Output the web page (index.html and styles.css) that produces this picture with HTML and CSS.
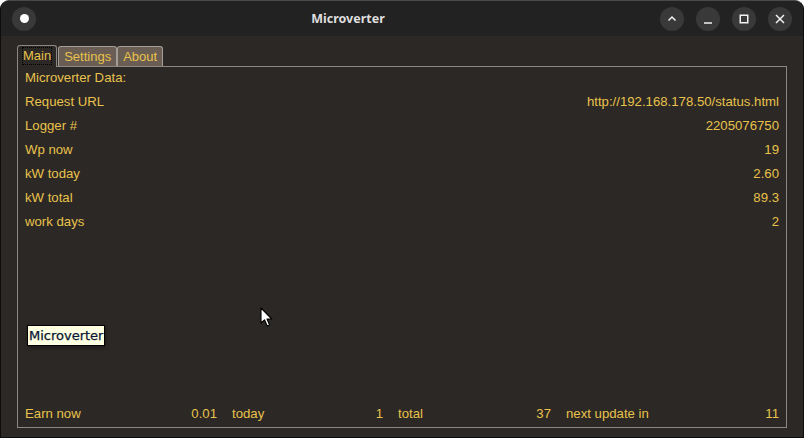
FILE: index.html
```html
<!DOCTYPE html>
<html>
<head>
<meta charset="utf-8">
<link rel="stylesheet" href="styles.css">
</head>
<body>
<div class="window">
  <div class="titlebar">
    <div class="tb-left"><span class="tb-btn"><span class="dot"></span></span></div>
    <div class="title">Microverter</div>
    <div class="tb-right">
      <span class="tb-btn"><svg width="24" height="24" viewBox="0 0 24 24"><path d="M8.5 13.5 L12 10 L15.5 13.5" fill="none" stroke="#f2f2f2" stroke-width="1.5"/></svg></span>
      <span class="tb-btn"><svg width="24" height="24" viewBox="0 0 24 24"><path d="M8 16 H16" fill="none" stroke="#f2f2f2" stroke-width="1.5"/></svg></span>
      <span class="tb-btn"><svg width="24" height="24" viewBox="0 0 24 24"><rect x="8.25" y="8.25" width="7.5" height="7.5" fill="none" stroke="#f2f2f2" stroke-width="1.5"/></svg></span>
      <span class="tb-btn"><svg width="24" height="24" viewBox="0 0 24 24"><path d="M8 8 L16 16 M16 8 L8 16" fill="none" stroke="#f2f2f2" stroke-width="1.5"/></svg></span>
    </div>
  </div>
  <div class="body">
    <div class="tabs">
      <div class="tab active"><span class="focus">Main</span></div>
      <div class="tab">Settings</div>
      <div class="tab">About</div>
    </div>
    <div class="panel">
      <div class="row"><span>Microverter Data:</span><span></span></div>
      <div class="row"><span>Request URL</span><span>http://192.168.178.50/status.html</span></div>
      <div class="row"><span>Logger #</span><span>2205076750</span></div>
      <div class="row"><span>Wp now</span><span>19</span></div>
      <div class="row"><span>kW today</span><span>2.60</span></div>
      <div class="row"><span>kW total</span><span>89.3</span></div>
      <div class="row"><span>work days</span><span>2</span></div>
      <div class="spacer"></div>
      <div class="footer">
        <div class="cell"><span>Earn now</span><span>0.01</span></div>
        <div class="cell"><span>today</span><span>1</span></div>
        <div class="cell"><span>total</span><span>37</span></div>
        <div class="cell"><span>next update in</span><span>11</span></div>
      </div>
    </div>
  </div>
  <div class="tooltip">Microverter</div>
  <svg class="cursor" width="14" height="22" viewBox="0 0 14 22"><path d="M1 1 L1 16 L4.5 12.8 L7.2 19 L9.6 18 L7 12 L11.8 12 Z" fill="#ffffff" stroke="#000000" stroke-width="1.1" stroke-linejoin="round"/></svg>
</div>
</body>
</html>
```
FILE: styles.css
```css
html, body {
  margin: 0;
  padding: 0;
  background: #ffffff;
}
.window {
  position: relative;
  width: 804px;
  height: 438px;
  box-sizing: border-box;
  border: 1px solid #0d0d0d;
  border-top-color: #4a4a4a;
  border-radius: 9px 9px 0 0;
  background: #2c2825;
  display: flex;
  flex-direction: column;
  overflow: hidden;
  font-family: "Liberation Sans", Arial, sans-serif;
  font-size: 13.2px;
  color: #e8c24c;
}
.titlebar {
  height: 35px;
  flex: none;
  background: #222222;
  display: flex;
  align-items: center;
  padding: 0 11px;
  box-sizing: border-box;
}
.tb-left {
  display: flex;
  width: 24px;
}
.tb-btn {
  width: 24px;
  height: 24px;
  border-radius: 50%;
  background: #393939;
  display: flex;
  align-items: center;
  justify-content: center;
}
.dot {
  width: 9px;
  height: 9px;
  border-radius: 50%;
  background: #ffffff;
}
.title {
  flex: 1;
  text-align: center;
  font-family: "Noto Sans", sans-serif;
  font-weight: 700;
  font-size: 12.5px;
  color: #dedede;
}
.tb-right {
  display: flex;
  gap: 12px;
}
.body {
  flex: 1;
  display: flex;
  flex-direction: column;
  padding: 9px 16px 9px 16px;
  min-height: 0;
}
.tabs {
  display: flex;
  align-items: flex-end;
  height: 21px;
  flex: none;
}
.tab {
  height: 19px;
  box-sizing: content-box;
  border: 1px solid #a29d97;
  border-bottom: none;
  border-radius: 3px 3px 0 0;
  background: #6a5d53;
  padding: 0 5px;
  line-height: 19px;
  font-size: 13px;
}
.tab.active {
  position: relative;
  height: 21px;
  line-height: 20px;
  margin-bottom: -1px;
  background: #2c2825;
  z-index: 1;
  margin-right: 1px;
  border-color: #8c8782;
}
.focus {
  outline: 1px dotted #000000;
  display: inline-block;
  line-height: 16px;
}
.panel {
  flex: 1;
  border: 1px solid #8c8782;
  display: flex;
  flex-direction: column;
  padding: 0 7px 2px 7px;
}
.row {
  display: flex;
  justify-content: space-between;
  height: 24px;
  line-height: 22px;
}
.spacer {
  flex: 1;
}
.footer {
  display: grid;
  grid-template-columns: 192px 151px 153px 1fr;
  column-gap: 15px;
  line-height: 22px;
}
.cell {
  display: flex;
  justify-content: space-between;
}
.tooltip {
  position: absolute;
  left: 26px;
  top: 324px;
  background: #ffffe1;
  border: 1px solid #000000;
  color: #081634;
  font-family: "DejaVu Sans", sans-serif;
  font-size: 13px;
  font-weight: 500;
  -webkit-text-stroke: 0.25px #081634;
  line-height: 19px;
  padding: 0 1px;
  box-shadow: 1px 2px 4px rgba(0,0,0,0.35);
}
.cursor {
  position: absolute;
  left: 259px;
  top: 306px;
}
```
